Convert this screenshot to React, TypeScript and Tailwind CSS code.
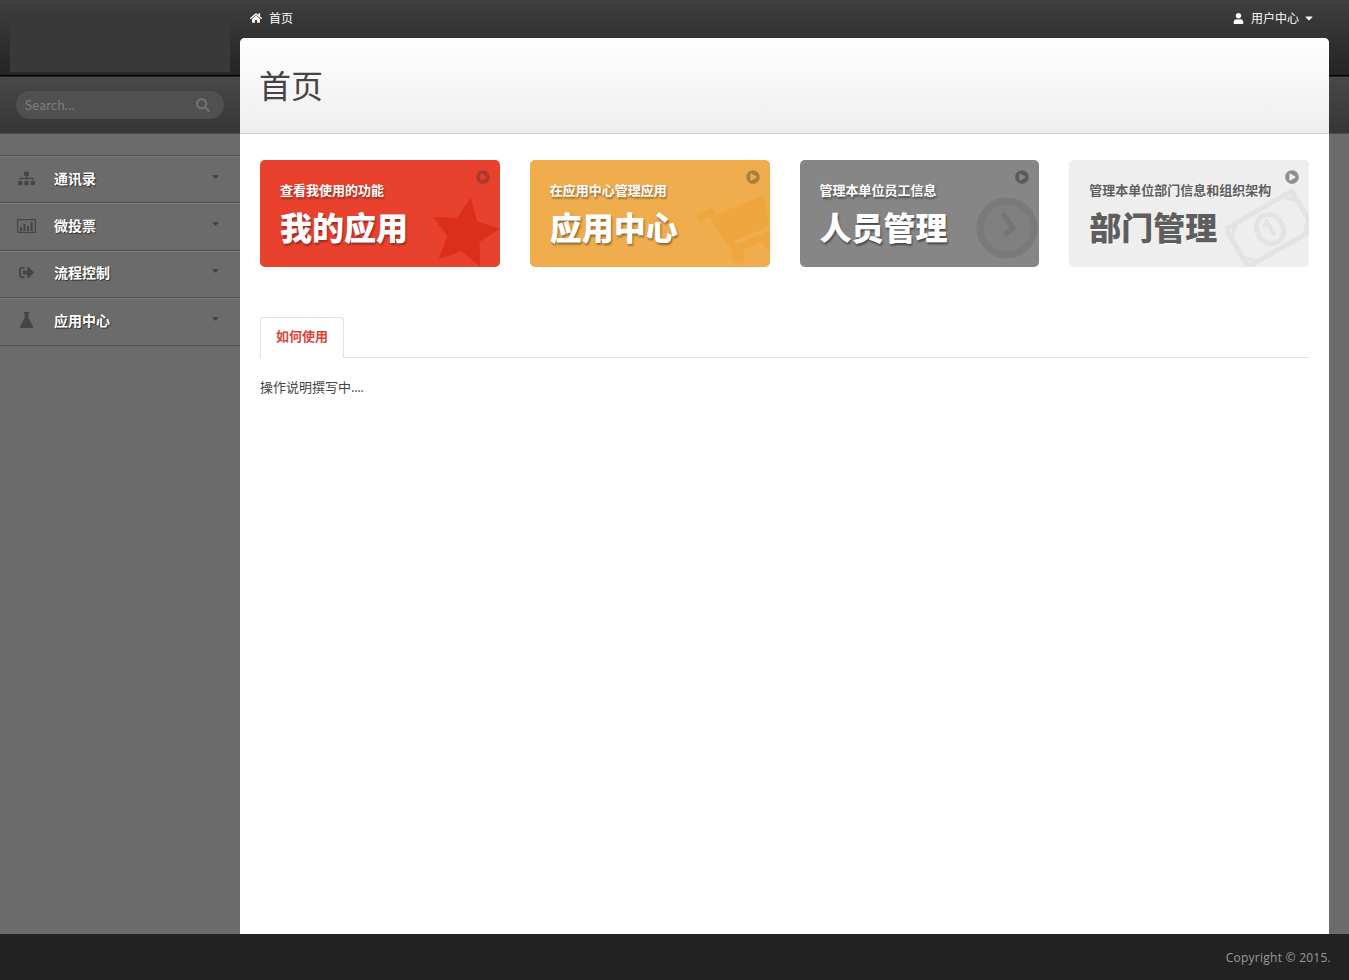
import React from "react";
import { FaCaretDown, FaHome, FaPlayCircle, FaSearch, FaShoppingCart, FaSignOutAlt, FaSitemap, FaUser } from "react-icons/fa";

const font = "font-['Microsoft_YaHei','Noto_Sans_CJK_SC','Noto_Sans',sans-serif]";

function ChartIcon() {
  return (
    <svg viewBox="0 0 19 14" className="h-[14px] w-[19px]" fill="currentColor">
      <path d="M0 0h19v14H0zM1.2 1.2v11.6h16.6V1.2z" fillRule="evenodd" />
      <path d="M3 8h2v4H3zM6.5 5h2v7h-2zM10 7h2v5h-2zM13.5 3h2v9h-2z" />
    </svg>
  );
}

function BeakerIcon() {
  return (
    <svg viewBox="0 0 14 17" className="h-[16px] w-[13px]" fill="currentColor">
      <path d="M4 0h6v1H9v5l5 9.6c.3.7-.1 1.4-.9 1.4H.9C.1 17-.3 16.3 0 15.6L5 6V1H4z" />
    </svg>
  );
}

const menu = [
  { label: "通讯录", icon: <FaSitemap className="h-[17px] w-[17px]" /> },
  { label: "微投票", icon: <ChartIcon /> },
  { label: "流程控制", icon: <FaSignOutAlt className="h-[15px] w-[15px]" /> },
  { label: "应用中心", icon: <BeakerIcon /> },
];

const cards = [
  {
    sub: "查看我使用的功能",
    title: "我的应用",
    box: "bg-[#e8412e] text-white",
    shadow: "[text-shadow:1px_2px_2px_rgba(0,0,0,0.35)]",
    play: "text-[#a93a2a]",
    art: (
      <svg viewBox="0 0 100 100" className="absolute right-[1px] top-[37px] h-[68px] w-[68px] rotate-[10deg] text-[#dc2f1a]" fill="currentColor">
        <polygon points="50,0 65,33 100,38 74,62 81,98 50,80 19,98 26,62 0,38 35,33" />
      </svg>
    ),
  },
  {
    sub: "在应用中心管理应用",
    title: "应用中心",
    box: "bg-[#f0ad4e] text-white",
    shadow: "[text-shadow:1px_2px_2px_rgba(0,0,0,0.4)]",
    play: "text-[#a8803f]",
    art: <FaShoppingCart className="absolute right-[-5px] top-[35px] h-[70px] w-[70px] rotate-[-22deg] text-[#efa63f]" />,
  },
  {
    sub: "管理本单位员工信息",
    title: "人员管理",
    box: "bg-[#868686] text-white",
    shadow: "[text-shadow:1px_2px_2px_rgba(0,0,0,0.45)]",
    play: "text-[#5c5c5c]",
    art: (
      <svg viewBox="0 0 62 62" className="absolute right-[1px] top-[37px] h-[62px] w-[62px]" fill="none">
        <circle cx="31" cy="31" r="27" stroke="#7a7a7a" strokeWidth="7" fill="#808080" />
        <path d="M27 16l10 15-8 7" stroke="#757575" strokeWidth="5" />
      </svg>
    ),
  },
  {
    sub: "管理本单位部门信息和组织架构",
    title: "部门管理",
    box: "bg-[#eeeeee] text-[#5e5e5e]",
    shadow: "[text-shadow:1px_1px_0_rgba(255,255,255,0.7)]",
    play: "text-[#8e8e8e]",
    art: (
      <svg viewBox="0 0 90 84" className="absolute right-[-6px] top-[27px] h-[84px] w-[90px]" fill="none" stroke="#e3e3e3">
        <g transform="rotate(-30 45 42)">
          <rect x="7" y="20" width="76" height="44" strokeWidth="5" />
          <ellipse cx="45" cy="42" rx="13" ry="15" strokeWidth="5" />
          <path d="M41 37l5-3v16" strokeWidth="4" />
          <path d="M8 30l9-9M82 54l-9 9M8 54l9 9M82 30l-9-9" strokeWidth="4" />
        </g>
      </svg>
    ),
  },
];

function Sidebar() {
  return (
    <aside className="flex w-[240px] shrink-0 flex-col">
      <div className="mx-[10px] mt-[10px] h-[62px] bg-[#393939] shadow-[0_1px_0_#2a2a2a]" />
      <div className="mt-[19px] px-[16px]">
        <div className="flex h-[28px] w-[208px] items-center justify-between rounded-full bg-[#505050] pl-[9px] pr-[14px] pt-[2px]">
          <span className="font-['Lato',sans-serif] text-[13px] tracking-[0.3px] text-[#7f7f7f]">Search...</span>
          <FaSearch className="mb-[2px] h-[14px] w-[14px] text-[#707070]" />
        </div>
      </div>
      <nav className="mt-[36px] border-t border-[#4f4f4f]">
        {menu.map((item) => (
          <div
            key={item.label}
            className="flex h-[47.4px] items-center border-b border-[#4f4f4f] pb-[2px] pl-[17px] pr-[19px] shadow-[inset_0_1px_0_#7d7d7d]"
          >
            <span className="flex w-[37px] text-[#454545]">
              <span className="flex w-[19px] justify-center">{item.icon}</span>
            </span>
            <span className="flex-1 text-[14px] font-bold text-white [text-shadow:1px_1px_1px_rgba(0,0,0,0.6)]">
              {item.label}
            </span>
            <FaCaretDown className="mb-[4px] h-[11px] w-[11px] text-[#3f3f3f]" />
          </div>
        ))}
      </nav>
    </aside>
  );
}

function Card({ card }: { card: (typeof cards)[number] }) {
  return (
    <div className={`relative h-[107px] overflow-hidden rounded-[5px] px-[20px] pt-[21px] ${card.box}`}>
      {card.art}
      <FaPlayCircle className={`absolute right-[10px] top-[10px] h-[14px] w-[14px] ${card.play}`} />
      <div className={`relative text-[13px] font-bold leading-[18px] ${card.shadow}`}>{card.sub}</div>
      <div className={`relative mt-[5px] text-[32px] font-black leading-[44px] ${card.shadow}`}>{card.title}</div>
    </div>
  );
}

export default function App() {
  return (
    <div className={`flex h-[980px] flex-col overflow-hidden ${font}`}>
      <div className="flex flex-1 bg-[linear-gradient(to_bottom,#3f3f3f_0,#242424_75px,#000_75px,#000_76px,#484848_77px,#363636_133px,#2c2c2c_133px,#6b6b6b_134px)]">
        <Sidebar />
        <div className="flex flex-1 flex-col pr-[20px]">
          <div className="flex h-[38px] shrink-0 items-center justify-between pb-[2px] pl-[10px] pr-[14px] text-[12px] text-white">
            <div className="flex items-center gap-[7px]">
              <FaHome className="h-[12px] w-[12px]" />
              <span>首页</span>
            </div>
            <div className="flex items-center">
              <FaUser className="mr-[7px] h-[11px] w-[11px]" />
              <span>用户中心</span>
              <FaCaretDown className="ml-[4px] h-[12px] w-[12px]" />
            </div>
          </div>
          <main className="flex flex-1 flex-col overflow-hidden rounded-t-[5px] bg-white">
            <div className="flex h-[96px] shrink-0 items-center border-b border-[#d0d0d0] bg-[linear-gradient(to_bottom,#ffffff,#eeeeee)] px-[20px] pb-[3px]">
              <h1 className="-ml-[1px] text-[32px] font-normal text-[#444444]">首页</h1>
            </div>
            <div className="px-[20px] pt-[26px]">
              <div className="grid grid-cols-4 gap-[30px]">
                {cards.map((card) => (
                  <Card key={card.title} card={card} />
                ))}
              </div>
              <div className="mt-[50px] flex h-[41px] border-b border-[#e3e3e3]">
                <div className="mb-[-1px] flex w-[84px] items-center justify-center rounded-t-[3px] border border-b-0 border-[#e3e3e3] bg-white pb-[4px] text-[13px] font-bold text-[#d9443a]">
                  如何使用
                </div>
              </div>
              <p className="mt-[20px] text-[13px] leading-[18px] text-[#444444]">
                操作说明撰写中<span className="tracking-[-0.5px]">....</span>
              </p>
            </div>
          </main>
        </div>
      </div>
      <footer className="flex h-[46px] shrink-0 items-center justify-end bg-[#222222] pr-[18px] pt-[2px] font-['Open_Sans',sans-serif] text-[12px] tracking-[0.25px] text-[#9a9a9a]">
        Copyright © 2015.
      </footer>
    </div>
  );
}
